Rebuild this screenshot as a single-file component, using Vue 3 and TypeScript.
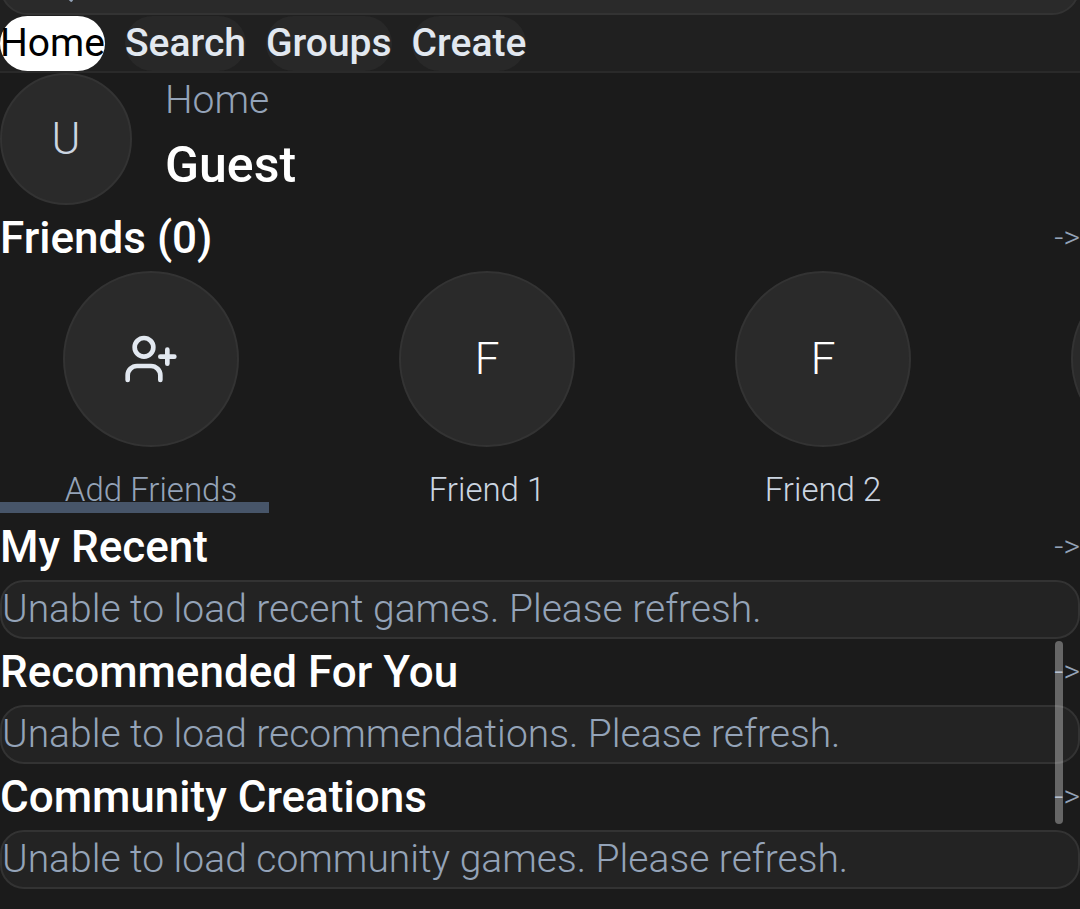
<script setup lang="ts">
import { ref } from 'vue'

interface NavItem {
  label: string
  active: boolean
}

interface Section {
  title: string
  message: string
}

const query = ref('')

const navItems: NavItem[] = [
  { label: 'Home', active: true },
  { label: 'Search', active: false },
  { label: 'Groups', active: false },
  { label: 'Create', active: false },
]

const friends: string[] = ['Friend 1', 'Friend 2', 'Friend 3']

const sections: Section[] = [
  { title: 'My Recent', message: 'Unable to load recent games. Please refresh.' },
  { title: 'Recommended For You', message: 'Unable to load recommendations. Please refresh.' },
  { title: 'Community Creations', message: 'Unable to load community games. Please refresh.' },
]
</script>

<template>
  <div class="page">
    <header class="topbar">
      <label class="search">
        <svg class="search-icon" viewBox="0 0 24 24" aria-hidden="true">
          <circle cx="11" cy="11" r="8" />
          <path d="M21 21l-4.3-4.3" />
        </svg>
        <input v-model="query" type="search" aria-label="Search" />
      </label>
      <nav class="nav">
        <a
          v-for="item in navItems"
          :key="item.label"
          href="#"
          class="pill"
          :class="{ active: item.active }"
        >{{ item.label }}</a>
      </nav>
    </header>

    <main>
      <section class="profile">
        <div class="avatar small">U</div>
        <div>
          <p class="crumb">Home</p>
          <h1 class="username">Guest</h1>
        </div>
      </section>

      <section>
        <div class="heading">
          <h2>Friends (0)</h2>
          <a href="#" class="more" aria-label="All friends">-&gt;</a>
        </div>
        <div class="friends">
          <ul class="track">
            <li class="friend">
              <button type="button" class="add">
                <span class="avatar large">
                  <svg class="icon" viewBox="0 0 24 24" aria-hidden="true">
                    <circle cx="9" cy="7" r="4" />
                    <path d="M16 21v-2a4 4 0 0 0-4-4H6a4 4 0 0 0-4 4v2" />
                    <path d="M19 8v6M16 11h6" />
                  </svg>
                </span>
                <span class="name muted">Add Friends</span>
              </button>
            </li>
            <li v-for="friend in friends" :key="friend" class="friend">
              <span class="avatar large">{{ friend.charAt(0) }}</span>
              <span class="name">{{ friend }}</span>
            </li>
          </ul>
          <div class="track-thumb"></div>
        </div>
      </section>

      <section v-for="section in sections" :key="section.title">
        <div class="heading">
          <h2>{{ section.title }}</h2>
          <a href="#" class="more" :aria-label="section.title">-&gt;</a>
        </div>
        <p class="notice">{{ section.message }}</p>
      </section>
    </main>

    <div class="page-thumb"></div>
  </div>
</template>

<style>
body {
  margin: 0;
  background: #1b1b1b;
}
</style>

<style scoped>
.page {
  position: relative;
  min-height: 100vh;
  overflow: hidden;
  background: #1b1b1b;
  color: #fff;
  font-family: Roboto, "Liberation Sans", sans-serif;
  font-size: 39px;
  font-weight: 300;
  line-height: 55px;
}

h1,
h2,
p,
ul {
  margin: 0;
  padding: 0;
}

a {
  color: inherit;
  text-decoration: none;
}

.topbar {
  display: flex;
  flex-direction: column;
  background: #202020;
  border-bottom: 2px solid #2a2a2a;
}

/* The field is scrolled mostly out of view. */
.search {
  display: flex;
  align-items: center;
  gap: 22px;
  box-sizing: border-box;
  height: 59px;
  margin: -44px 0 1px;
  padding: 0 36px;
  border: 2px solid #333;
  border-radius: 28px;
  background: #2a2a2a;
  color: #94a3b8;
}

.search input {
  flex: 1;
  min-width: 0;
  padding: 0;
  border: 0;
  outline: none;
  background: none;
  color: #e2e8f0;
  font: inherit;
  appearance: none;
}

.search-icon {
  width: 38px;
  height: 38px;
}

.nav {
  display: flex;
  gap: 20px;
}

.pill {
  border-radius: 28px;
  background: #282828;
  color: #e2e8f0;
  font-weight: 500;
}

.pill.active {
  background: #fff;
  color: #000;
  font-weight: 400;
}

.profile {
  display: flex;
  gap: 33px;
}

.avatar {
  display: flex;
  align-items: center;
  justify-content: center;
  box-sizing: border-box;
  border: 2px solid #333;
  border-radius: 50%;
  background: #2a2a2a;
  font-size: 44px;
}

.small {
  width: 132px;
  height: 132px;
  color: #cbd5e1;
}

.large {
  width: 176px;
  height: 176px;
}

.crumb {
  color: #94a3b8;
}

.username {
  font-size: 50px;
  font-weight: 500;
  line-height: 75px;
}

.heading {
  display: flex;
  align-items: flex-start;
  justify-content: space-between;
  line-height: 66px;
}

h2 {
  font-size: 44px;
  font-weight: 500;
}

.more {
  color: #94a3b8;
  font-size: 32px;
  line-height: 64px;
}

.friends {
  position: relative;
  overflow: hidden;
}

.track {
  display: flex;
  gap: 34px;
  padding-bottom: 2px;
  list-style: none;
}

.friend,
.add {
  display: flex;
  flex: none;
  flex-direction: column;
  align-items: center;
  gap: 21px;
  width: 302px;
}

.add {
  padding: 0;
  border: 0;
  background: none;
  color: #e2e8f0;
  font: inherit;
}

.name {
  color: #cbd5e1;
  font-size: 33px;
  line-height: 44px;
}

.name.muted {
  color: #94a3b8;
}

.icon,
.search-icon {
  fill: none;
  stroke: currentColor;
  stroke-width: 2;
  stroke-linecap: round;
  stroke-linejoin: round;
}

.icon {
  width: 56px;
  height: 56px;
}

.track-thumb {
  position: absolute;
  bottom: 1px;
  left: 0;
  width: 269px;
  height: 11px;
  background: #475569;
}

.notice {
  border: 2px solid #333;
  border-radius: 24px;
  background: #232323;
  color: #94a3b8;
}

.page-thumb {
  position: absolute;
  top: 641px;
  right: 17px;
  width: 8px;
  height: 183px;
  border-radius: 4px;
  background: rgba(255, 255, 255, 0.33);
}
</style>
